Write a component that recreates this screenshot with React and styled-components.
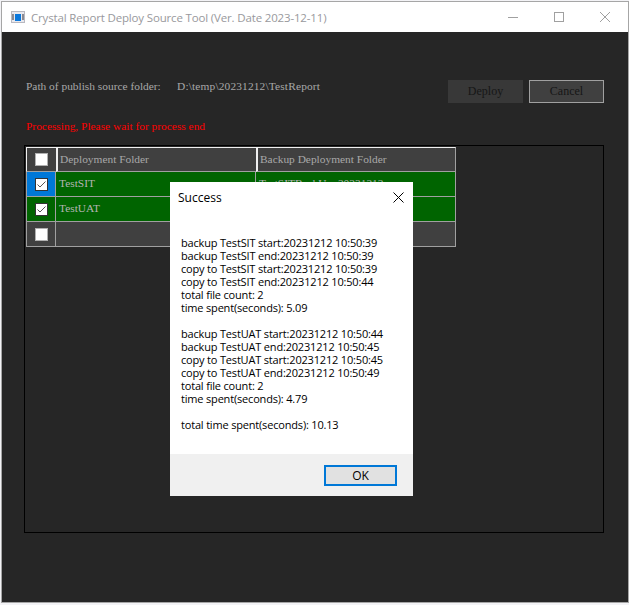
import React from 'react';
import styled, { createGlobalStyle } from 'styled-components';

const GlobalStyle = createGlobalStyle`
  html, body {
    margin: 0;
    padding: 0;
    background: #f3f3f6;
  }
`;

const Win = styled.div`
  position: relative;
  width: 628px;
  height: 602px;
  margin: 1px 0 0 1px;
  box-sizing: border-box;
  border: 1px solid #a6a6a6;
  display: flex;
  flex-direction: column;
  background: #262626;
  overflow: hidden;
`;

const TitleBar = styled.div`
  height: 30px;
  flex: none;
  background: #fff;
  display: flex;
  align-items: center;
  padding-left: 9px;
  font: 11.5px "Open Sans", sans-serif;
  letter-spacing: -0.16px;
  color: #99999d;
`;

const TitleText = styled.span`
  margin-left: 6px;
  white-space: nowrap;
  flex: 1;
`;

const Caption = styled.div`
  width: 46px;
  height: 30px;
  display: flex;
  align-items: center;
  justify-content: center;
`;

const Body = styled.div`
  flex: 1;
  padding: 48px 24px 0 22px;
  font: 11.4px "Liberation Serif", serif;
  color: #a8a8a8;
`;

const TopRow = styled.div`
  display: flex;
  align-items: flex-start;
  height: 23px;
`;

const PathLabel = styled.span`
  width: 153px;
  margin-top: -1px;
  line-height: 14px;
  padding-left: 2px;
  box-sizing: border-box;
`;

const PathValue = styled.span`
  flex: 1;
  margin-top: -1px;
  line-height: 14px;
  letter-spacing: 0.15px;
`;

const ActionButton = styled.button`
  width: 75px;
  height: 23px;
  margin-left: 6px;
  padding: 0;
  box-sizing: border-box;
  font: 12px "Liberation Serif", serif;
  color: #161616;
  background: ${(p) => (p.$focused ? '#404040' : '#383838')};
  border: ${(p) => (p.$focused ? '1px solid #a0a0a0' : 'none')};
`;

const Status = styled.div`
  margin-top: 16px;
  padding-left: 2px;
  height: 14px;
  line-height: 14px;
  color: #ff0000;
`;

const GridBox = styled.div`
  margin-top: 12px;
  width: 580px;
  height: 388px;
  padding: 1px 0 0 1px;
  box-sizing: border-box;
  border: 1px solid #000;
`;

const Table = styled.div`
  display: grid;
  width: 430px;
  grid-template-columns: 30px 200px 200px;
  grid-auto-rows: 25px;
`;

const Head = styled.div`
  background: #404040;
  box-sizing: border-box;
  border-top: 1px solid #f0f0f0;
  border-bottom: 1px solid #a0a0a0;
  border-left: ${(p) => (p.$first ? '1px solid #f0f0f0' : '2px solid #f0f0f0')};
  border-right: ${(p) => (p.$last ? '1px solid #a0a0a0' : 'none')};
  display: flex;
  align-items: center;
  justify-content: ${(p) => (p.$first ? 'center' : 'flex-start')};
  padding: ${(p) => (p.$first ? '0' : '0 0 2px 2px')};
`;

const Cell = styled.div`
  background: ${(p) => p.$bg};
  box-sizing: border-box;
  border-bottom: 1px solid #a0a0a0;
  border-right: 1px solid #a0a0a0;
  border-left: ${(p) => (p.$first ? '1px solid #a0a0a0' : 'none')};
  display: flex;
  align-items: center;
  justify-content: ${(p) => (p.$first ? 'center' : 'flex-start')};
  padding: ${(p) => (p.$first ? '0' : '0 0 2px 3px')};
  color: #b4b4b4;
`;

const Box = styled.span`
  width: 13px;
  height: 13px;
  box-sizing: border-box;
  background: #fff;
  border: 1px solid ${(p) => (p.$dark ? '#333' : '#b0b0b0')};
  display: flex;
  align-items: center;
  justify-content: center;
`;

const Dialog = styled.div`
  position: absolute;
  left: 168px;
  top: 180px;
  width: 243px;
  height: 314px;
  background: #fff;
  display: flex;
  flex-direction: column;
  font: 12px "Open Sans", sans-serif;
  color: #000;
`;

const DialogHead = styled.div`
  height: 31px;
  flex: none;
  display: flex;
  align-items: center;
  justify-content: space-between;
  padding: 0 9px 0 8px;
`;

const Message = styled.pre`
  flex: 1;
  margin: 0;
  padding: 23px 0 0 11px;
  font: 11px "Open Sans", sans-serif;
  letter-spacing: -0.18px;
  line-height: 13px;
  white-space: pre;
`;

const DialogFoot = styled.div`
  height: 42px;
  flex: none;
  background: #f0f0f0;
  display: flex;
  align-items: center;
  justify-content: flex-end;
  padding-right: 16px;
`;

const OkButton = styled.button`
  width: 73px;
  height: 21px;
  padding: 0;
  box-sizing: border-box;
  background: #e1e1e1;
  border: 2px solid #0078d7;
  font: 12px "Open Sans", sans-serif;
  color: #000;
`;

const Check = () => (
  <svg width="11" height="11" viewBox="0 0 11 11">
    <path d="M1.5 5.5 L4 8 L9.5 2.5" fill="none" stroke="#555" strokeWidth="1" />
  </svg>
);

const AppIcon = () => (
  <svg width="14" height="12" viewBox="0 0 14 12" style={{ flex: 'none' }}>
    <rect width="14" height="12" fill="#b8b8c0" />
    <rect x="1" y="1" width="12" height="10" fill="#e8e8ee" />
    <rect x="1" y="3" width="2" height="6" fill="#8a8a92" />
    <rect x="11" y="3" width="2" height="6" fill="#8a8a92" />
    <rect x="4" y="3" width="6" height="7" fill="#0a78dc" />
  </svg>
);

const MESSAGE = `backup TestSIT start:20231212 10:50:39
backup TestSIT end:20231212 10:50:39
copy to TestSIT start:20231212 10:50:39
copy to TestSIT end:20231212 10:50:44
total file count: 2
time spent(seconds): 5.09

backup TestUAT start:20231212 10:50:44
backup TestUAT end:20231212 10:50:45
copy to TestUAT start:20231212 10:50:45
copy to TestUAT end:20231212 10:50:49
total file count: 2
time spent(seconds): 4.79

total time spent(seconds): 10.13`;

const rows = [
  { id: 1, name: 'TestSIT', backup: 'TestSITBackUp_20231212', checked: true, bg: '#006400', boxBg: '#0078d7' },
  { id: 2, name: 'TestUAT', backup: 'TestUATBackUp_20231212', checked: true, bg: '#006400', boxBg: '#006400' },
  { id: 3, name: '', backup: '', checked: false, bg: '#404040', boxBg: '#404040' },
];

export default function App() {
  return (
    <>
      <GlobalStyle />
      <Win>
        <TitleBar>
          <AppIcon />
          <TitleText>Crystal Report Deploy Source Tool (Ver. Date 2023-12-11)</TitleText>
          <Caption>
            <svg width="10" height="10" viewBox="0 0 10 10"><path d="M0 5.5H10" stroke="#a0a0a0" /></svg>
          </Caption>
          <Caption>
            <svg width="10" height="10" viewBox="0 0 10 10"><rect x="0.5" y="0.5" width="9" height="9" fill="none" stroke="#a0a0a0" /></svg>
          </Caption>
          <Caption>
            <svg width="10" height="10" viewBox="0 0 10 10"><path d="M0 0L10 10M10 0L0 10" stroke="#a0a0a0" /></svg>
          </Caption>
        </TitleBar>
        <Body>
          <TopRow>
            <PathLabel>Path of publish source folder:</PathLabel>
            <PathValue>D:\temp\20231212\TestReport</PathValue>
            <ActionButton>Deploy</ActionButton>
            <ActionButton $focused>Cancel</ActionButton>
          </TopRow>
          <Status>Processing, Please wait for process end</Status>
          <GridBox>
            <Table>
              <Head $first><Box /></Head>
              <Head>Deployment Folder</Head>
              <Head $last>Backup Deployment Folder</Head>
              {rows.map((r) => (
                <React.Fragment key={r.id}>
                  <Cell $first $bg={r.boxBg}>
                    <Box $dark={r.checked}>{r.checked && <Check />}</Box>
                  </Cell>
                  <Cell $bg={r.bg}>{r.name}</Cell>
                  <Cell $bg={r.bg}>{r.backup}</Cell>
                </React.Fragment>
              ))}
            </Table>
          </GridBox>
        </Body>
        <Dialog>
          <DialogHead>
            <span>Success</span>
            <svg width="11" height="11" viewBox="0 0 11 11"><path d="M0.5 0.5L10.5 10.5M10.5 0.5L0.5 10.5" stroke="#000" /></svg>
          </DialogHead>
          <Message>{MESSAGE}</Message>
          <DialogFoot>
            <OkButton>OK</OkButton>
          </DialogFoot>
        </Dialog>
      </Win>
    </>
  );
}
